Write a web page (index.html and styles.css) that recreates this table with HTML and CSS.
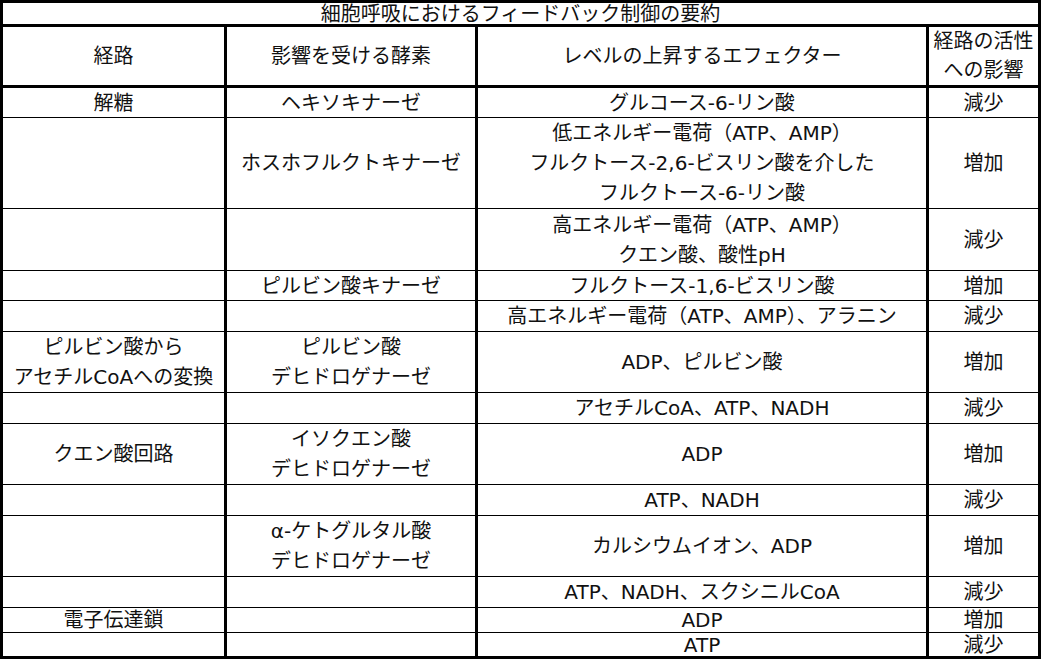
FILE: index.html
```html
<!DOCTYPE html>
<html lang="ja">
<head>
<meta charset="utf-8">
<title>細胞呼吸におけるフィードバック制御の要約</title>
<link rel="stylesheet" href="styles.css">
</head>
<body>
<div class="sheet">
  <div class="cell title">細胞呼吸におけるフィードバック制御の要約</div>

  <div class="cell head">経路</div>
  <div class="cell head">影響を受ける酵素</div>
  <div class="cell head">レベルの上昇するエフェクター</div>
  <div class="cell head">経路の活性<br>への影響</div>

  <div class="cell">解糖</div>
  <div class="cell">ヘキソキナーゼ</div>
  <div class="cell">グルコース-6-リン酸</div>
  <div class="cell">減少</div>

  <div class="cell"></div>
  <div class="cell">ホスホフルクトキナーゼ</div>
  <div class="cell">低エネルギー電荷（ATP、AMP）<br>フルクトース-2,6-ビスリン酸を介した<br>フルクトース-6-リン酸</div>
  <div class="cell">増加</div>

  <div class="cell"></div>
  <div class="cell"></div>
  <div class="cell">高エネルギー電荷（ATP、AMP）<br>クエン酸、酸性pH</div>
  <div class="cell">減少</div>

  <div class="cell"></div>
  <div class="cell">ピルビン酸キナーゼ</div>
  <div class="cell">フルクトース-1,6-ビスリン酸</div>
  <div class="cell">増加</div>

  <div class="cell"></div>
  <div class="cell"></div>
  <div class="cell">高エネルギー電荷（ATP、AMP）、アラニン</div>
  <div class="cell">減少</div>

  <div class="cell">ピルビン酸から<br>アセチルCoAへの変換</div>
  <div class="cell">ピルビン酸<br>デヒドロゲナーゼ</div>
  <div class="cell">ADP、ピルビン酸</div>
  <div class="cell">増加</div>

  <div class="cell"></div>
  <div class="cell"></div>
  <div class="cell">アセチルCoA、ATP、NADH</div>
  <div class="cell">減少</div>

  <div class="cell">クエン酸回路</div>
  <div class="cell">イソクエン酸<br>デヒドロゲナーゼ</div>
  <div class="cell">ADP</div>
  <div class="cell">増加</div>

  <div class="cell"></div>
  <div class="cell"></div>
  <div class="cell">ATP、NADH</div>
  <div class="cell">減少</div>

  <div class="cell"></div>
  <div class="cell">α-ケトグルタル酸<br>デヒドロゲナーゼ</div>
  <div class="cell">カルシウムイオン、ADP</div>
  <div class="cell">増加</div>

  <div class="cell"></div>
  <div class="cell"></div>
  <div class="cell">ATP、NADH、スクシニルCoA</div>
  <div class="cell">減少</div>

  <div class="cell">電子伝達鎖</div>
  <div class="cell"></div>
  <div class="cell">ADP</div>
  <div class="cell">増加</div>

  <div class="cell"></div>
  <div class="cell"></div>
  <div class="cell">ATP</div>
  <div class="cell">減少</div>
</div>
</body>
</html>
```

FILE: styles.css
```css
html, body {
  margin: 0;
  padding: 0;
  background: #ffffff;
}

.sheet {
  width: 1041px;
  box-sizing: border-box;
  display: grid;
  grid-template-columns: 221px 248px 448px 109px;
  grid-template-rows: 23px 60px 29px 90px 61px 29px 30px 60px 30px 60px 30px 60px 30px 24px 23px;
  column-gap: 3px;
  row-gap: 1px;
  padding: 3px;
  background: #000000;
  font-family: "DejaVu Sans", "Noto Sans CJK JP", sans-serif;
  font-size: 20px;
  line-height: 30px;
  color: #111111;
}

.cell {
  background: #ffffff;
  display: flex;
  flex-direction: column;
  align-items: center;
  justify-content: center;
  text-align: center;
  white-space: nowrap;
}

.title {
  grid-column: 1 / -1;
  margin-bottom: 2px;
  line-height: 20px;
  padding-top: 1px;
}

.head {
  margin-bottom: 2px;
  line-height: 29px;
}
```
